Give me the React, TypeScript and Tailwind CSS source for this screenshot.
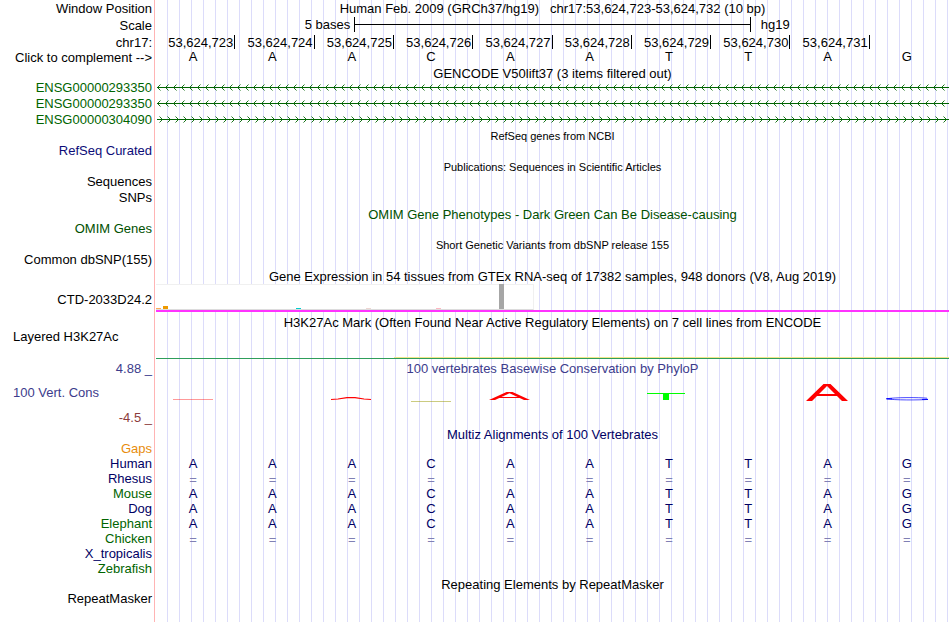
import { FC, ReactNode } from "react";
import clsx from "clsx";

const SEQUENCE = ["A", "A", "A", "C", "A", "A", "T", "T", "A", "G"];
const FIRST_BASE = 53624723;

interface GtexBar {
  height: number;
  color: string;
}

const GTEX_BARS: Record<number, GtexBar> = {
  0: { height: 1, color: "#ffaa56" },
  1: { height: 3, color: "#ee9a00" },
  20: { height: 1, color: "#00cdcd" },
  30: { height: 1, color: "#eed5d2" },
  40: { height: 1, color: "#ffb6c1" },
  49: { height: 25, color: "#a6a6a6" },
};

interface Species {
  name: string;
  color: string;
  bases?: string[];
  unaligned?: boolean;
}

const GAP_BASES = SEQUENCE.map(() => "=");

const SPECIES: Species[] = [
  { name: "Gaps", color: "text-[#e88c0c]" },
  { name: "Human", color: "text-[#000064]", bases: SEQUENCE },
  {
    name: "Rhesus",
    color: "text-[#000064]",
    bases: GAP_BASES,
    unaligned: true,
  },
  { name: "Mouse", color: "text-[#006400]", bases: SEQUENCE },
  { name: "Dog", color: "text-[#000064]", bases: SEQUENCE },
  { name: "Elephant", color: "text-[#006400]", bases: SEQUENCE },
  {
    name: "Chicken",
    color: "text-[#006400]",
    bases: GAP_BASES,
    unaligned: true,
  },
  { name: "X_tropicalis", color: "text-[#000064]" },
  { name: "Zebrafish", color: "text-[#006400]" },
];

interface RowProps {
  label?: ReactNode;
  labelClass?: string;
  height: string;
  children?: ReactNode;
}

const Row: FC<RowProps> = ({ label, labelClass, height, children }) => (
  <div className={clsx("flex", height)}>
    <div
      className={clsx(
        "mr-px flex w-[155px] shrink-0 items-center justify-end border-r border-[#ffb4b4] pr-0.5 whitespace-pre",
        labelClass
      )}
    >
      {label}
    </div>
    <div className="mr-px flex min-w-0 flex-1 flex-col justify-center bg-[repeating-linear-gradient(to_right,transparent_0px,transparent_11px,#dcdcfa_11px,#dcdcfa_12px)]">
      {children}
    </div>
  </div>
);

interface TitleProps {
  children: ReactNode;
  className?: string;
}

const Title: FC<TitleProps> = ({ children, className }) => (
  <h2 className={clsx("text-center whitespace-pre", className)}>{children}</h2>
);

interface BasesProps {
  bases: string[];
  className?: string;
}

const Bases: FC<BasesProps> = ({ bases, className }) => (
  <div className={clsx("grid grid-cols-10 text-center", className)}>
    {bases.map((base, i) => (
      <span key={i} className="pr-[5px]">
        {base}
      </span>
    ))}
  </div>
);

interface TranscriptProps {
  id: string;
  direction: "left" | "right";
}

const Transcript: FC<TranscriptProps> = ({ id, direction }) => (
  <svg className="h-4 w-full" aria-hidden="true">
    <defs>
      <pattern id={id} width="8" height="16" patternUnits="userSpaceOnUse">
        <path
          d={
            direction === "left"
              ? "M4.5 4.5L1.5 7.5L4.5 10.5"
              : "M3.5 4.5L6.5 7.5L3.5 10.5"
          }
          fill="none"
          stroke="#006400"
          strokeWidth="0.9"
        />
      </pattern>
    </defs>
    <rect width="100%" height="16" fill={`url(#${id})`} />
    <rect x="1" y="7" width="100%" height="1" fill="#006400" />
  </svg>
);

const GtexGraph: FC = () => (
  <div className="flex h-full flex-col">
    <div className="flex h-[26px] w-[378px] items-end gap-0.5 border-t border-r border-b border-t-[#f0f0f0] border-r-[#f0f0f0] border-b-[#dcdcdc] bg-white">
      {Array.from({ length: 54 }, (_, i) => (
        <div
          key={i}
          className="w-[5px] shrink-0"
          style={{
            height: GTEX_BARS[i]?.height ?? 0,
            backgroundColor: GTEX_BARS[i]?.color,
          }}
        />
      ))}
    </div>
    <div className="h-0.5 bg-[#ff33ff]" />
  </div>
);

// Conservation marks, one per base; the zero line sits near the bottom
const MARKS: ReactNode[] = [
  <path d="M2 19.5H42" stroke="#ff0000" strokeWidth="0.5" opacity="0.8" />,
  null,
  <path
    d="M2 19.5L9 19L18 17.7H26L35 19L42 19.5"
    fill="none"
    stroke="#ff0000"
    strokeWidth="1.2"
  />,
  <path d="M2 21.5H42" stroke="#969600" strokeWidth="0.5" />,
  <g fill="#ff0000">
    <path d="M1 20L18.5 12H24.5L42 20H36L21.5 13.2L7 20Z" />
    <rect x="11" y="17" width="21" height="1" />
  </g>,
  null,
  <g fill="#00ff00">
    <rect x="1" y="13" width="38" height="1" />
    <rect x="17" y="13" width="6" height="7" />
  </g>,
  null,
  <g fill="#ff0000">
    <path d="M1 21L18.5 4H25.5L43 21H37L22 6L7 21Z" />
    <rect x="11" y="14" width="22" height="2" />
  </g>,
  <g fill="none" stroke="#0000ff">
    <path
      d="M43 18.2C36 17.3 10 17.3 3 18.8C9 20.2 36 20.2 44 19.4"
      strokeWidth="0.7"
    />
    <path d="M2 18.8H8M38 19.4H44" />
  </g>,
];

const App: FC = () => {
  return (
    <main className="flex min-h-screen flex-col overflow-hidden bg-white font-['Liberation_Sans',Arial,sans-serif] text-[13px] leading-[15px] text-black">
      <Row label="Window Position" height="h-4">
        <Title>
          {"Human Feb. 2009 (GRCh37/hg19)   chr17:53,624,723-53,624,732 (10 bp)"}
        </Title>
      </Row>
      <Row label="Scale" labelClass="pt-0.5" height="h-[17px]">
        <div className="flex items-center">
          <span className="w-1/4 pr-1 text-right">5 bases</span>
          <div className="flex h-[15px] w-1/2 items-center border-x border-black">
            <div className="h-px w-full bg-black" />
          </div>
          <span className="pl-2.5">hg19</span>
        </div>
      </Row>
      <Row label="chr17:" labelClass="pt-0.5" height="h-[17px]">
        <div className="grid grid-cols-10 text-right">
          {SEQUENCE.map((_, i) => (
            <div
              key={i}
              className={clsx("h-[14px] pr-px", i < 9 && "border-r border-black")}
            >
              {i < 9 && (FIRST_BASE + i).toLocaleString("en-US")}
            </div>
          ))}
        </div>
      </Row>
      <Row
        label={<button type="button">{"Click to complement -->"}</button>}
        height="h-[15px]"
      >
        <Bases bases={SEQUENCE} className="pb-0.5" />
      </Row>

      <Row height="h-[15px]">
        <Title className="pt-0.5">
          GENCODE V50lift37 (3 items filtered out)
        </Title>
      </Row>
      <Row
        label="ENSG00000293350"
        labelClass="pb-0.5 text-[#006400]"
        height="h-4"
      >
        <Transcript id="transcript-1" direction="left" />
      </Row>
      <Row
        label="ENSG00000293350"
        labelClass="pb-0.5 text-[#006400]"
        height="h-4"
      >
        <Transcript id="transcript-2" direction="left" />
      </Row>
      <Row
        label="ENSG00000304090"
        labelClass="pb-0.5 text-[#006400]"
        height="h-4"
      >
        <Transcript id="transcript-3" direction="right" />
      </Row>

      <Row height="h-4">
        <Title className="text-[11px]">RefSeq genes from NCBI</Title>
      </Row>
      <Row
        label="RefSeq Curated"
        labelClass="pb-0.5 text-[#0c0c78]"
        height="h-[15px]"
      />
      <Row height="h-4">
        <Title className="text-[11px]">
          Publications: Sequences in Scientific Articles
        </Title>
      </Row>
      <Row label="Sequences" labelClass="pb-0.5" height="h-[15px]" />
      <Row label="SNPs" labelClass="pb-0.5" height="h-4" />

      <Row height="h-4">
        <Title className="text-[#005000]">
          OMIM Gene Phenotypes - Dark Green Can Be Disease-causing
        </Title>
      </Row>
      <Row
        label="OMIM Genes"
        labelClass="pb-0.5 text-[#005000]"
        height="h-[15px]"
      />
      <Row height="h-4">
        <Title className="text-[11px]">
          Short Genetic Variants from dbSNP release 155
        </Title>
      </Row>
      <Row label="Common dbSNP(155)" labelClass="pb-0.5" height="h-[15px]" />

      <Row height="h-4">
        <Title>
          Gene Expression in 54 tissues from GTEx RNA-seq of 17382 samples, 948
          donors (V8, Aug 2019)
        </Title>
      </Row>
      <Row label="CTD-2033D24.2" height="h-[30px]">
        <GtexGraph />
      </Row>

      <Row height="h-[15px]">
        <Title className="pt-0.5">
          H3K27Ac Mark (Often Found Near Active Regulatory Elements) on 7 cell
          lines from ENCODE
        </Title>
      </Row>
      <Row
        label={
          <span className="w-full self-start pl-[13px]">Layered H3K27Ac</span>
        }
        height="h-[31px]"
      >
        <div className="mt-auto mb-px">
          <div className="ml-[30%] h-px bg-[#f0e68c]" />
          <div className="h-px bg-[#2e9e5b]" />
        </div>
      </Row>

      <Row label="4.88 _" labelClass="text-[#3c3c8c]" height="h-4">
        <Title className="text-[#3c3c8c]">
          100 vertebrates Basewise Conservation by PhyloP
        </Title>
      </Row>
      <Row
        label={
          <div className="flex h-full w-full flex-col justify-between pt-[9px] pb-px">
            <span className="pl-[13px] text-[#3c3c8c]">100 Vert. Cons</span>
            <span className="text-right text-[#8c3c3c]">-4.5 _</span>
          </div>
        }
        height="h-[50px]"
      >
        <div className="grid grid-cols-10">
          {MARKS.map((mark, i) => (
            <div key={i} className="flex justify-center pr-1.5 pb-[18px]">
              <svg viewBox="0 0 44 24" className="h-6 w-11" aria-hidden="true">
                {mark}
              </svg>
            </div>
          ))}
        </div>
      </Row>

      <Row height="h-[15px]">
        <Title className="pt-0.5 text-[#000064]">
          Multiz Alignments of 100 Vertebrates
        </Title>
      </Row>
      {SPECIES.map(({ name, color, bases, unaligned }) => (
        <Row key={name} label={name} labelClass={color} height="h-[15px]">
          {bases && (
            <Bases
              bases={bases}
              className={unaligned ? "pt-0.5 text-[#8080b4]" : "text-[#000064]"}
            />
          )}
        </Row>
      ))}

      <Row height="h-4">
        <Title>Repeating Elements by RepeatMasker</Title>
      </Row>
      <Row label="RepeatMasker" labelClass="pb-0.5" height="h-[15px]" />
      <Row height="grow" />
    </main>
  );
};

export default App;
